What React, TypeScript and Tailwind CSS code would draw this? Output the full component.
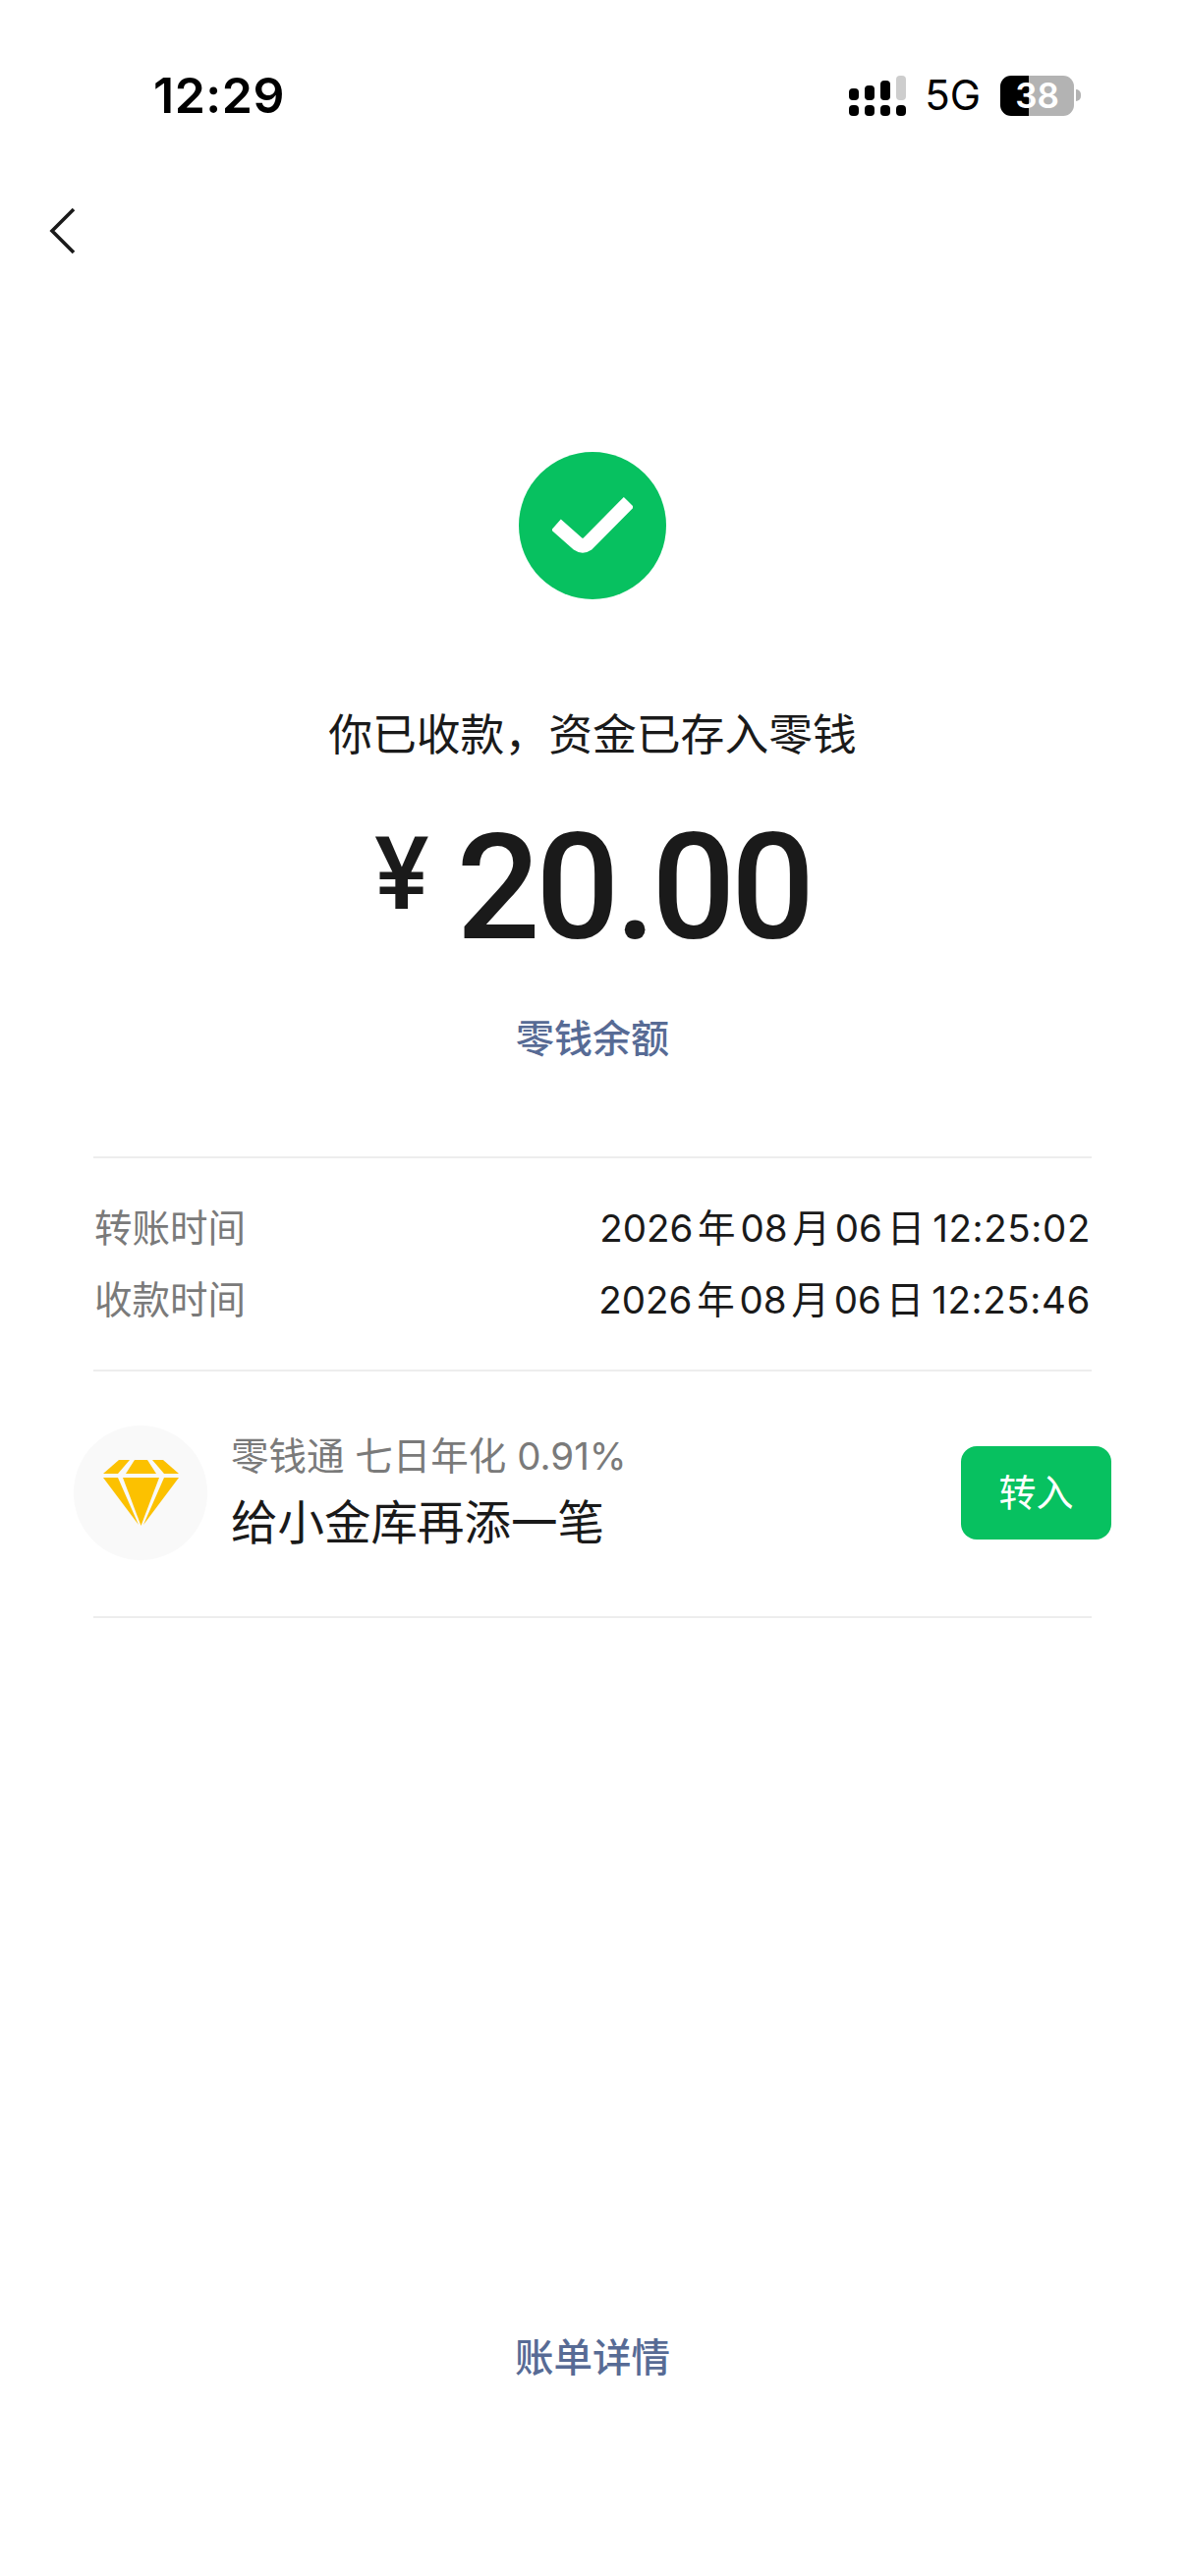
const cjk = "font-['Inter','Noto_Sans_CJK_SC',sans-serif]";

function Signal() {
  return (
    <svg width="58" height="41" viewBox="0 0 58 41" className="block">
      <rect x="0" y="13" width="10" height="12" rx="4" fill="#000" />
      <rect x="16" y="10" width="10" height="15" rx="4" fill="#000" />
      <rect x="32" y="5" width="10" height="20" rx="4" fill="#000" />
      <rect x="48" y="0" width="10" height="25" rx="4" fill="#cdcdcd" />
      <rect x="0" y="30" width="10" height="11" rx="4" fill="#000" />
      <rect x="16" y="30" width="10" height="11" rx="4" fill="#000" />
      <rect x="32" y="30" width="10" height="11" rx="4" fill="#000" />
      <rect x="48" y="30" width="10" height="11" rx="4" fill="#000" />
    </svg>
  );
}

function Battery() {
  return (
    <div className="relative flex items-center w-[82px] h-[41px]">
      <div className="flex w-[75px] h-[41px] rounded-[11px] overflow-hidden">
        <div className="w-[29px] bg-black" />
        <div className="flex-1 bg-[#b3b3b3]" />
      </div>
      <div className="w-[5px] h-[12px] ml-[2px] rounded-r-full bg-[#b3b3b3]" />
      <span className="absolute left-0 top-0 w-[75px] h-[41px] flex items-center justify-center text-white text-[35px] font-semibold leading-none font-['Inter',sans-serif]">
        38
      </span>
    </div>
  );
}

function Row({ label, date, time }: { label: string; date: string; time: string }) {
  return (
    <div className="flex justify-between items-center h-[60px]">
      <span className="text-[38.5px] text-[#7a7a7a] leading-[60px]">{label}</span>
      <span className="flex text-[38.5px] text-[#1a1a1a] leading-[60px] whitespace-nowrap">
        <span className="[word-spacing:-6px]">{date}</span>
        <span className="ml-[8px] tracking-[0.6px]">{time}</span>
      </span>
    </div>
  );
}

function Divider() {
  return <div className="h-[2px] mx-[95px] bg-[#ededed]" />;
}

export default function App() {
  return (
    <div className={`w-[1206px] h-[2622px] bg-white flex flex-col ${cjk}`}>
      <div className="h-[194px] flex items-center justify-between pl-[156px] pr-[106px]">
        <span className="text-[50px] font-semibold leading-none text-black tracking-[0.5px] font-['Inter',sans-serif]">12:29</span>
        <div className="flex items-center">
          <Signal />
          <span className="ml-[19px] mr-[20px] text-[42px] leading-none text-black font-['Inter',sans-serif]">5G</span>
          <Battery />
        </div>
      </div>

      <div className="h-[90px] pl-[50px] pt-[17px]">
        <svg width="27" height="48" viewBox="0 0 27 48" fill="none" className="block">
          <path d="M25 2 L3 24 L25 46" stroke="#1a1a1a" strokeWidth="3.6" />
        </svg>
      </div>

      <div className="flex flex-col items-center pt-[176px]">
        <div className="w-[150px] h-[150px] rounded-full bg-[#07c160] flex items-center justify-center">
          <svg width="82" height="60" viewBox="0 0 82 60" fill="none" className="block">
            <path d="M4 29 L26 48.5 Q31 52 36 48.5 L78 6" stroke="#fff" strokeWidth="14.5" />
          </svg>
        </div>
        <div className="mt-[108px] text-[44.8px] leading-[60px] text-[#1a1a1a] whitespace-nowrap">你已收款，资金已存入零钱</div>
        <div className="mt-[51px] h-[150px] flex items-start text-[#1a1a1a] font-['Roboto',sans-serif] font-medium">
          <span className="text-[104px] leading-[150px] mr-[28px] -mt-[14px]">¥</span>
          <span className="text-[150px] leading-[150px] tracking-[-4.5px]">20.00</span>
        </div>
        <div className="mt-[48px] text-[39px] leading-[60px] text-[#576b95] font-medium">零钱余额</div>
      </div>

      <div className="mt-[90px]">
        <Divider />
      </div>
      <div className="mt-[41px] mx-[96px] flex flex-col gap-[13px]">
        <Row label="转账时间" date="2026 年 08 月 06 日" time="12:25:02" />
        <Row label="收款时间" date="2026 年 08 月 06 日" time="12:25:46" />
      </div>
      <div className="mt-[41px]">
        <Divider />
      </div>

      <div className="mt-[55px] h-[137px] pl-[75px] pr-[75px] flex items-center">
        <div className="w-[136px] h-[137px] rounded-full bg-[#f9f9f9] flex items-center justify-center">
          <svg width="77" height="68" viewBox="0 0 77 68" className="block">
            <g fill="#fcc100">
              <polygon points="16,0 27,0 15,14 0,14" />
              <polygon points="32,0 45,0 54,14 23,14" />
              <polygon points="50,0 61,0 77,14 62,14" />
              <polygon points="0,18 15,18 36,66" />
              <polygon points="20,18 57,18 38.5,67" />
              <polygon points="62,18 77,18 41,66" />
            </g>
          </svg>
        </div>
        <div className="ml-[24px] flex-1 flex flex-col">
          <span className="text-[38.5px] leading-[52px] text-[#7a7a7a] whitespace-nowrap -mt-[2px]">零钱通 七日年化 0.91%</span>
          <span className="mt-[11px] text-[47.5px] leading-[62px] text-[#1a1a1a] whitespace-nowrap">给小金库再添一笔</span>
        </div>
        <div className="w-[153px] h-[95px] rounded-[16px] bg-[#07c160] flex items-center justify-center text-white text-[38px] pb-[1px]">
          转入
        </div>
      </div>

      <div className="mt-[57px]">
        <Divider />
      </div>

      <div className="flex-1 flex flex-col justify-end items-center pb-[192px]">
        <span className="text-[39.5px] leading-[60px] text-[#576b95] font-medium">账单详情</span>
      </div>
    </div>
  );
}
